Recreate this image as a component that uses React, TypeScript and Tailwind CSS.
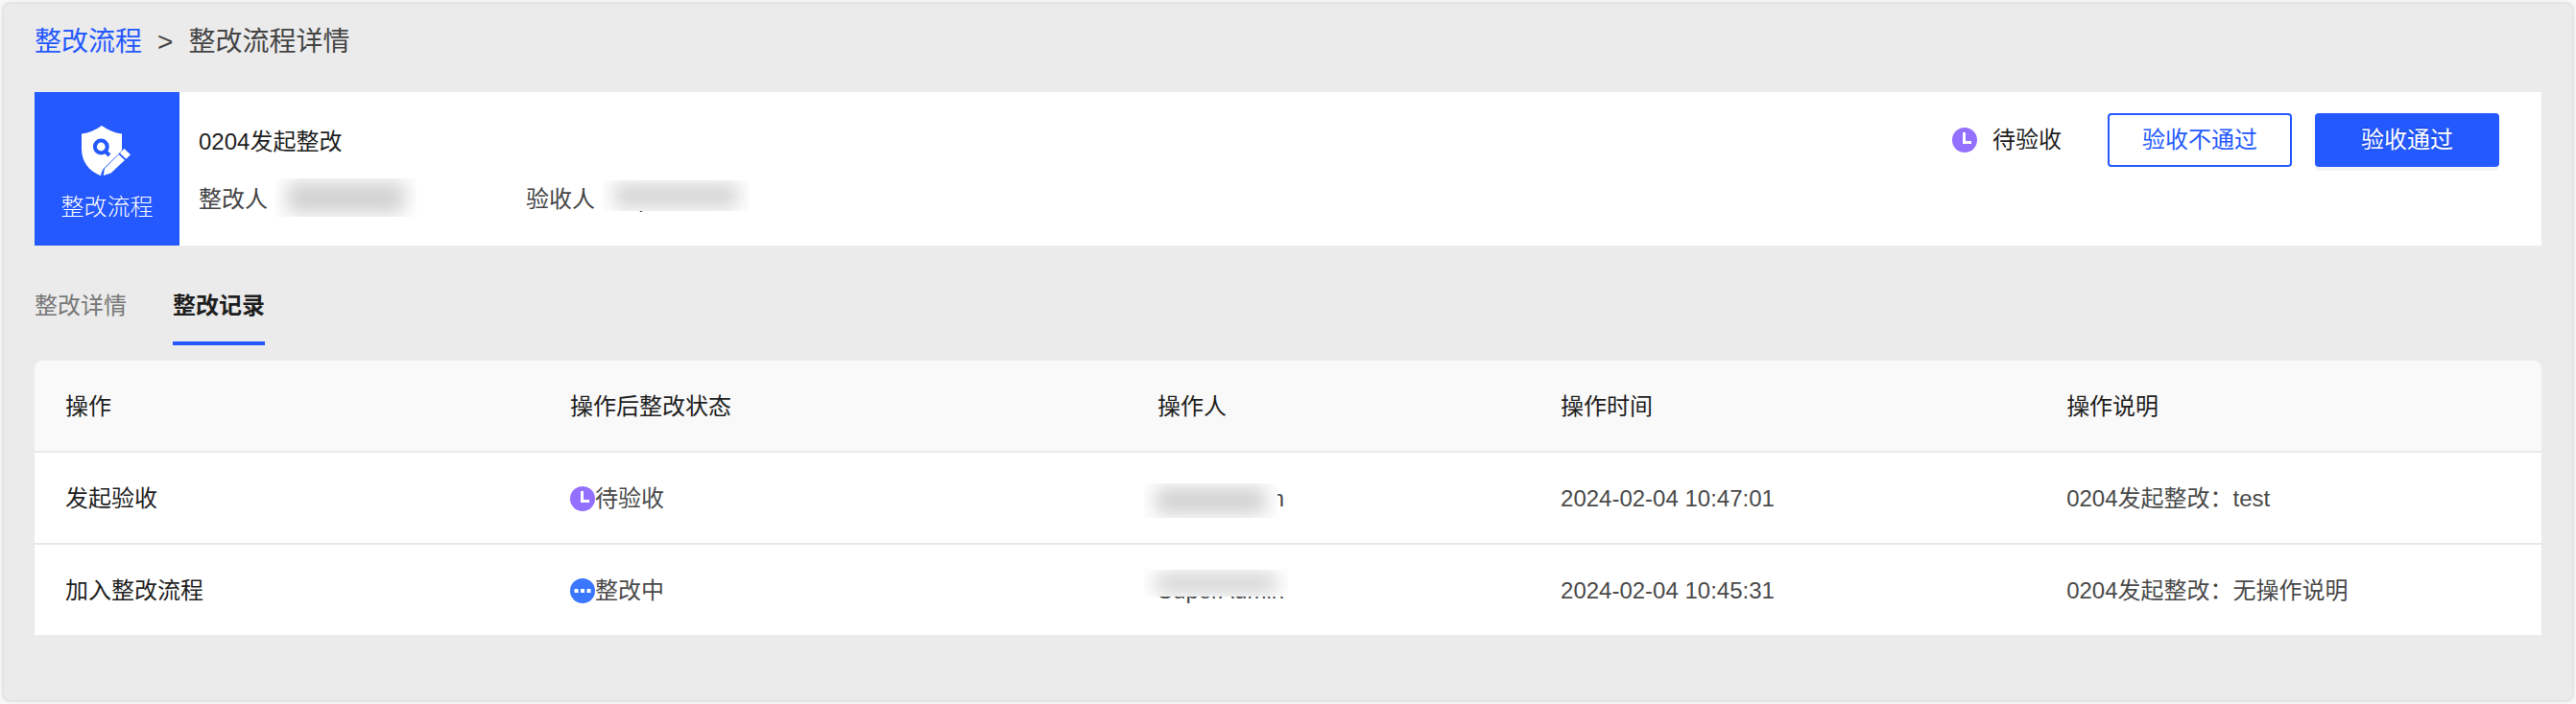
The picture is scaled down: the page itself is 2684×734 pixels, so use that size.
type Status = "pending" | "progress";

const STATUS_LABEL: Record<Status, string> = {
  pending: "待验收",
  progress: "整改中",
};

const TABS = ["整改详情", "整改记录"];

const COLUMNS = [
  { title: "操作", width: "w-[20.14%]" },
  { title: "操作后整改状态", width: "w-[23.43%]" },
  { title: "操作人", width: "w-[16.08%]" },
  { title: "操作时间", width: "w-[20.18%]" },
  { title: "操作说明", width: "w-[20.17%]" },
];

const RECORDS: { action: string; status: Status; mask: string; time: string; note: string }[] = [
  {
    action: "发起验收",
    status: "pending",
    mask: "-left-3.5 top-0.5 h-9 w-[139px]",
    time: "2024-02-04 10:47:01",
    note: "0204发起整改：test",
  },
  {
    action: "加入整改流程",
    status: "progress",
    mask: "-left-3.5 -top-1 h-7 w-[150px]",
    time: "2024-02-04 10:45:31",
    note: "0204发起整改：无操作说明",
  },
];

function StatusIcon({ status }: { status: Status }) {
  return (
    <svg viewBox="0 0 26 26" className="size-[26px] shrink-0" aria-hidden="true">
      {status === "pending" ? (
        <>
          <circle cx="13" cy="13" r="13" fill="#9370ff" />
          <path d="M12.5 5v10.500h7.500" fill="none" stroke="#fff" strokeWidth="3" />
        </>
      ) : (
        <>
          <circle cx="13" cy="13" r="13" fill="#3a76ff" />
          <path d="M4.5 11h4v4h-4zM11 11h4v4h-4zM17.5 11h4v4h-4z" fill="#fff" />
        </>
      )}
    </svg>
  );
}

function ShieldIcon() {
  return (
    <svg viewBox="1 0 54 54" className="size-[54px]" aria-hidden="true">
      <path
        d="M22 1C16 5.500 9 8.500 1 9.500V25C1 38 8 48 21 53.300C21.300 51.500 21.600 50 22.300 48.700C23 46.500 24.500 45 26.300 43.500L43 27V9.500C35 8.500 28 5.500 22 1Z"
        fill="#fff"
      />
      <circle cx="21.300" cy="23" r="6.400" fill="none" stroke="#2459ff" strokeWidth="4" />
      <path d="M25.500 27.500l4.500 4.500" stroke="#2459ff" strokeWidth="4" />
      <path d="M39.700 31L46 36.900L31.500 50.500L23.700 53L24.900 46Z" fill="#fff" />
      <path d="M40.900 29.700L45.400 25L52 31.300L47.400 35.800Z" fill="#fff" />
    </svg>
  );
}

// name with a blurred patch laid over it
function MaskedName({ mask }: { mask: string }) {
  return (
    <span className="relative inline-block leading-9">
      SuperAdmin
      <span className={`absolute overflow-hidden bg-white ${mask}`}>
        <span className="absolute inset-x-3 inset-y-1 bg-[#d0d0d0] blur-[10px]" />
      </span>
    </span>
  );
}

export default function App() {
  return (
    <div className="min-h-screen bg-[#f8f8f8] p-1 font-['Liberation_Sans','Noto_Sans_CJK_SC',sans-serif] text-2xl text-[#1f1f1f]">
      <main className="min-h-[726px] rounded-md bg-[#ebebeb] px-8 pt-4 shadow-[0_0_4px_#bbb]">
        <nav className="flex items-center gap-4 text-[28px] leading-[48px] text-[#444]">
          <a href="#list" className="text-[#2459ff]">整改流程</a>
          <span>&gt;</span>
          <span>整改流程详情</span>
        </nav>

        <section className="mt-7 flex h-40 bg-white">
          <div className="flex w-[151px] shrink-0 flex-col items-center justify-center gap-4 bg-[#2459ff] pt-2.5 font-light text-white">
            <ShieldIcon />
            <span>整改流程</span>
          </div>
          <div className="flex flex-1 flex-col gap-5 pt-8 pl-5">
            <h1 className="leading-10">0204发起整改</h1>
            <div className="flex items-center leading-10 text-[#444]">
              <div className="flex w-[341px] items-center gap-4">
                <span>整改人</span>
                <MaskedName mask="-left-2 -top-1 h-10 w-[147px]" />
              </div>
              <div className="flex items-center gap-4">
                <span>验收人</span>
                <MaskedName mask="-left-2 -top-0.5 h-8 w-[153px]" />
              </div>
            </div>
          </div>
          <div className="mt-[22px] mr-11 flex h-14 items-center gap-6">
            <div className="mr-6 flex items-center gap-4">
              <StatusIcon status="pending" />
              <span>待验收</span>
            </div>
            <button type="button" className="h-14 w-48 rounded-sm border-2 border-[#2459ff] text-[#2459ff]">
              验收不通过
            </button>
            <button
              type="button"
              className="h-14 w-48 rounded-sm bg-[#2459ff] text-white shadow-[0_4px_0_rgba(0,0,0,0.045)] [text-shadow:0_-2px_0_rgba(0,0,0,0.12)]"
            >
              验收通过
            </button>
          </div>
        </section>

        <div role="tablist" className="mt-10 flex gap-12">
          {TABS.map((tab, i) => (
            <button
              key={tab}
              type="button"
              role="tab"
              aria-selected={i === 1}
              className={
                i === 1
                  ? "h-16 border-b-4 border-[#2459ff] pb-3.5 font-bold"
                  : "h-16 border-b-4 border-transparent pb-3.5 text-[#777]"
              }
            >
              {tab}
            </button>
          ))}
        </div>

        <table className="mt-4 w-full table-fixed border-separate border-spacing-0 text-left">
          <thead>
            <tr className="h-24">
              {COLUMNS.map((col) => (
                <th
                  key={col.title}
                  className={`${col.width} border-b-2 border-[#e8e8e8] bg-[#f9f9f9] px-8 pt-0.5 font-normal first:rounded-tl-lg last:rounded-tr-lg`}
                >
                  {col.title}
                </th>
              ))}
            </tr>
          </thead>
          <tbody className="text-[#4a4a4a]">
            {RECORDS.map((row) => (
              <tr
                key={row.time}
                className="h-24 *:border-b-2 *:border-[#e8e8e8] *:bg-white *:px-8 *:pt-0.5 last:*:border-[#ebebeb]"
              >
                <td className="text-[#1f1f1f]">{row.action}</td>
                <td>
                  <span className="flex items-center">
                    <StatusIcon status={row.status} />
                    {STATUS_LABEL[row.status]}
                  </span>
                </td>
                <td>
                  <MaskedName mask={row.mask} />
                </td>
                <td>{row.time}</td>
                <td>{row.note}</td>
              </tr>
            ))}
          </tbody>
        </table>
      </main>
    </div>
  );
}
